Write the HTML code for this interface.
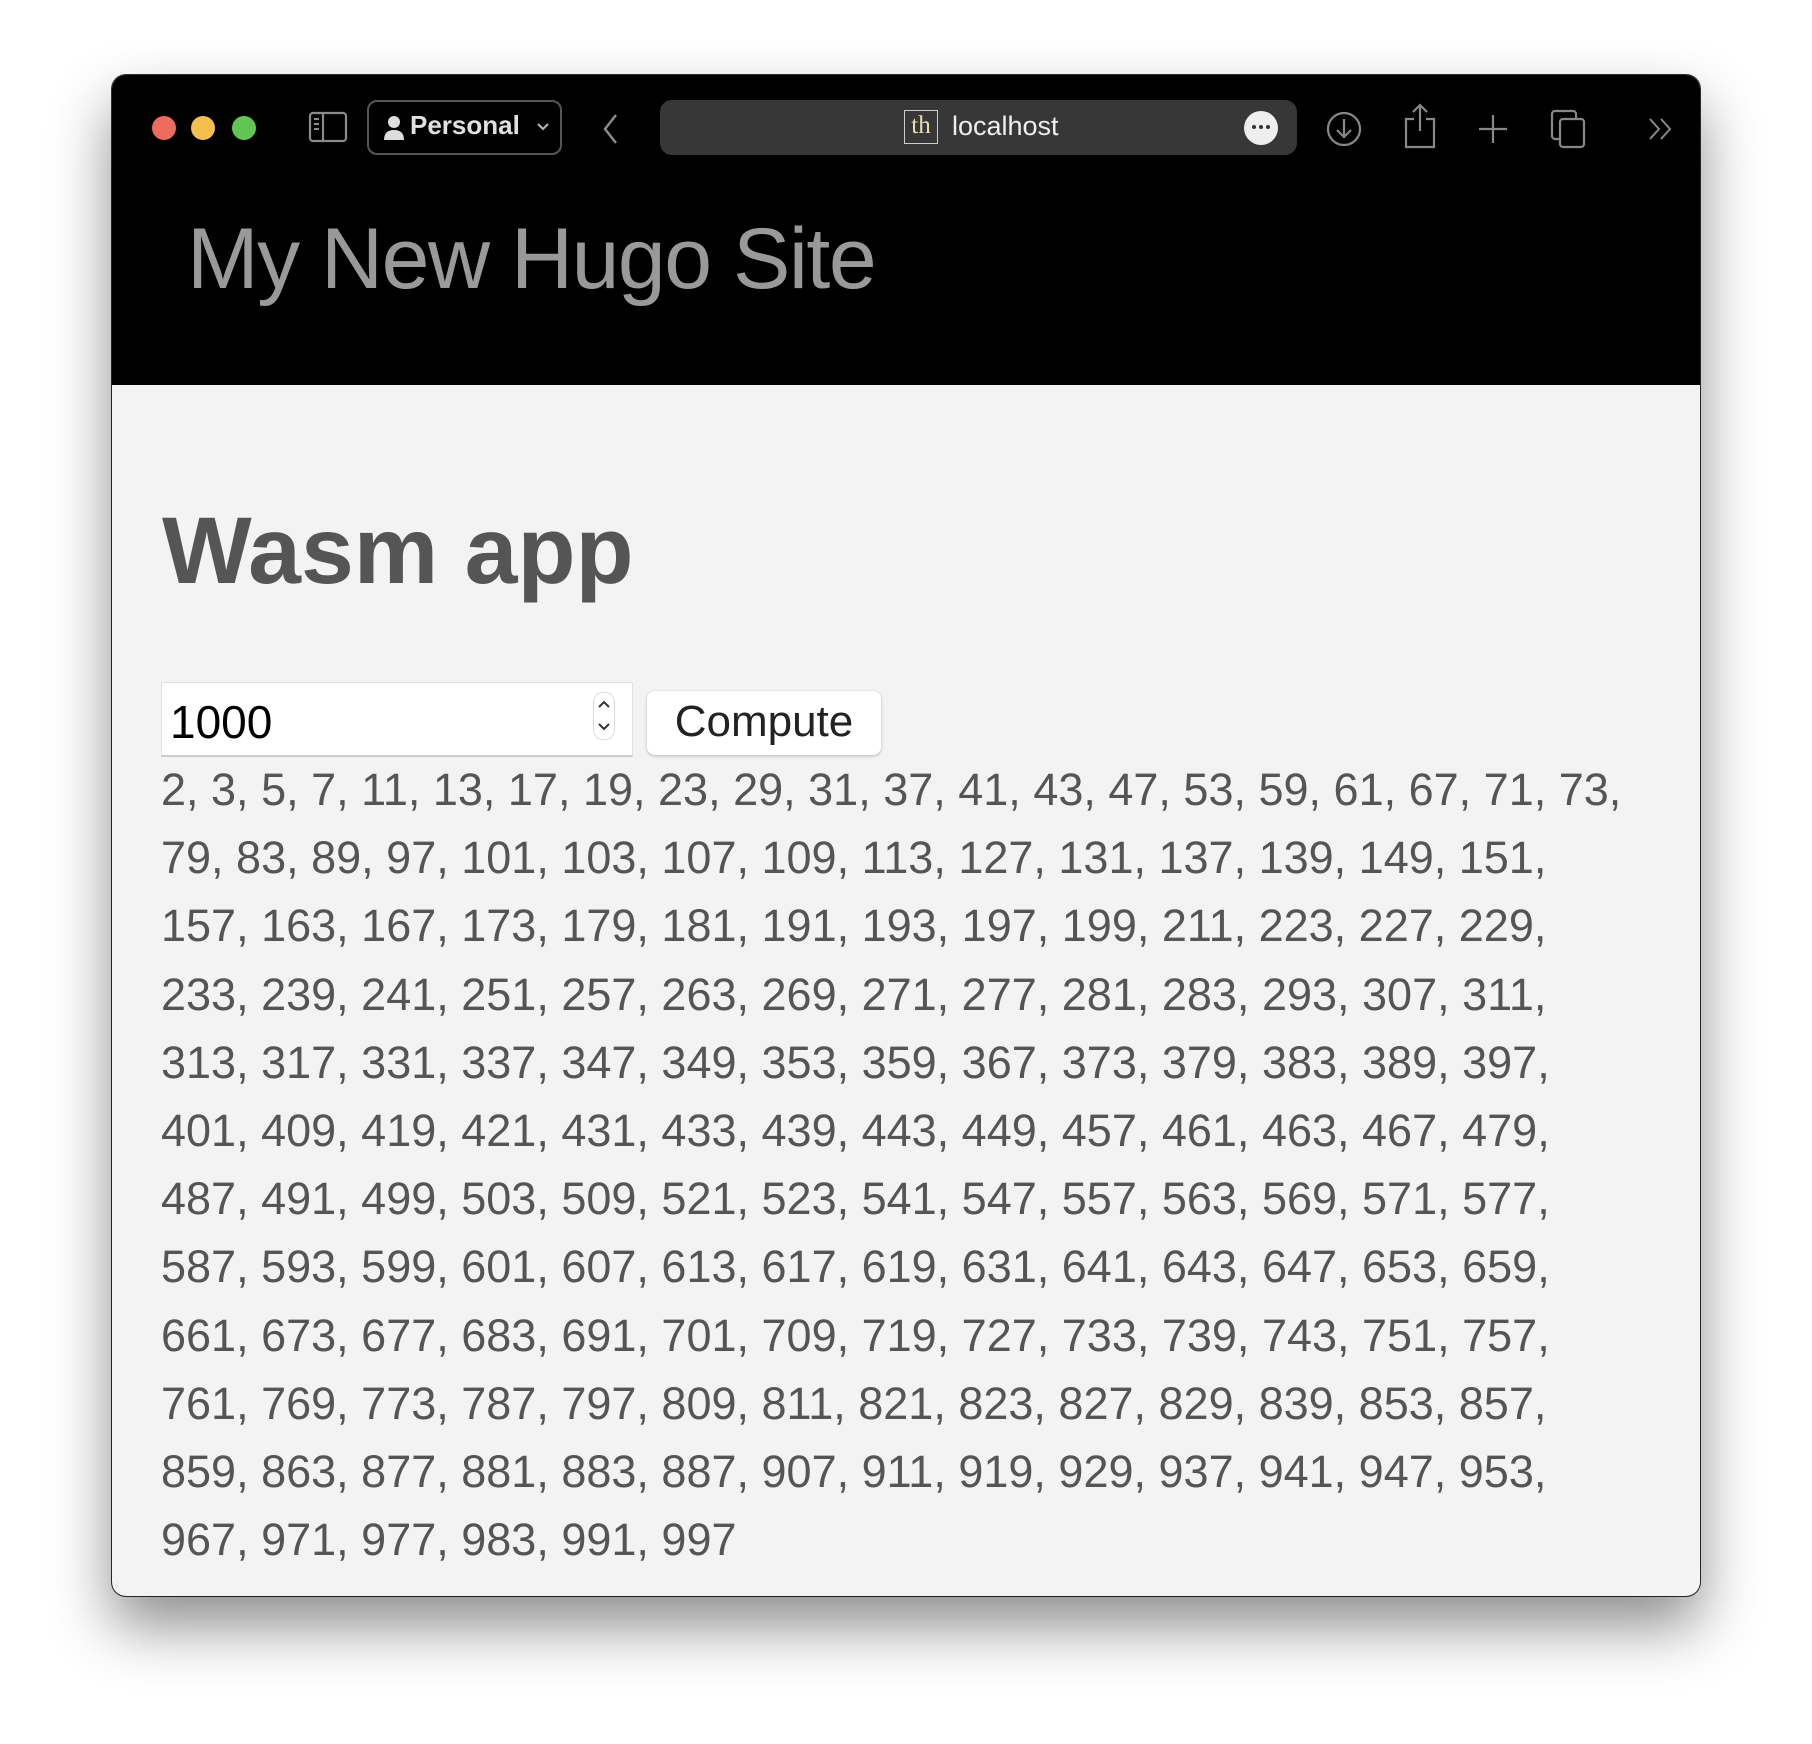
<!DOCTYPE html>
<html><head><meta charset="utf-8">
<style>
html,body{margin:0;padding:0;width:1812px;height:1744px;background:#fff;overflow:hidden;font-family:"Liberation Sans",sans-serif;}
.win{position:absolute;left:112px;top:75px;width:1588px;height:1521px;border-radius:14px;overflow:hidden;background:#f3f3f3;box-shadow:0 30px 60px rgba(0,0,0,0.45),0 0 0 1px #333;}
.hdr{position:absolute;left:0;top:0;width:1588px;height:310px;background:#000;}
.light{position:absolute;top:41px;width:24px;height:24px;border-radius:50%;}
.title{position:absolute;left:75px;top:135px;font-size:86px;letter-spacing:-1.5px;color:#999;font-weight:normal;white-space:nowrap;}
.url{position:absolute;left:548px;top:25px;width:637px;height:55px;background:#373737;border-radius:12px;}
h1{position:absolute;left:50px;top:422px;margin:0;font-size:95px;font-weight:bold;color:#555;letter-spacing:0;}
.inp{position:absolute;left:49px;top:607px;width:472px;height:75px;background:#fff;border:1px solid #e2e2e2;border-bottom:2px solid #ccc;box-sizing:border-box;}
.btn{position:absolute;left:535px;top:616px;width:234px;height:64px;background:#fff;border-radius:8px;box-shadow:0 1px 3px rgba(0,0,0,0.25);box-sizing:border-box;font-size:44px;color:#222;text-align:center;line-height:62px;}
.nums{position:absolute;left:49px;top:681px;font-size:45px;line-height:68.2px;color:#555;white-space:nowrap;}
</style></head><body>
<div class="win">
 <div class="hdr">
  <div class="light" style="left:40px;background:#ed6a5e"></div>
  <div class="light" style="left:79px;background:#f5bf4f"></div>
  <div class="light" style="left:120px;background:#61c554"></div>
  <svg style="position:absolute;left:196px;top:36px" width="40" height="32" viewBox="0 0 40 32"><rect x="2" y="2" width="36" height="28" rx="3" fill="none" stroke="#8a8a8a" stroke-width="2.2"/><line x1="15" y1="2" x2="15" y2="30" stroke="#8a8a8a" stroke-width="2.2"/><line x1="6" y1="8" x2="11" y2="8" stroke="#8a8a8a" stroke-width="2"/><line x1="6" y1="13" x2="11" y2="13" stroke="#8a8a8a" stroke-width="2"/><line x1="6" y1="18" x2="11" y2="18" stroke="#8a8a8a" stroke-width="2"/></svg>
  <div style="position:absolute;left:255px;top:25px;width:195px;height:55px;border:2px solid #555;border-radius:10px;box-sizing:border-box;"></div>
  <svg style="position:absolute;left:270px;top:39px" width="24" height="28" viewBox="0 0 24 28"><circle cx="12" cy="8" r="6" fill="#ddd"/><path d="M2 26 Q2 16 12 16 Q22 16 22 26 Z" fill="#ddd"/></svg>
  <div style="position:absolute;left:298px;top:35px;font-size:26px;font-weight:bold;color:#e0e0e0;">Personal</div>
  <svg style="position:absolute;left:424px;top:47px" width="14" height="10" viewBox="0 0 14 10"><path d="M2 2 L7 7 L12 2" fill="none" stroke="#bbb" stroke-width="2"/></svg>
  <svg style="position:absolute;left:488px;top:37px" width="20" height="34" viewBox="0 0 20 34"><path d="M16 3 L5 17 L16 31" fill="none" stroke="#8a8a8a" stroke-width="2.5"/></svg>
  <div class="url"></div>
  <div style="position:absolute;left:792px;top:35px;width:34px;height:34px;border:1.5px solid #ccc;box-sizing:border-box;font-family:'Liberation Serif',serif;font-size:25px;color:#e8dcb0;text-align:center;line-height:30px;">th</div>
  <div style="position:absolute;left:840px;top:36px;font-size:27px;color:#eee;">localhost</div>
  <div style="position:absolute;left:1132px;top:36px;width:34px;height:34px;border-radius:50%;background:#eee;"></div>
  <div style="position:absolute;left:1140px;top:50px;width:4px;height:4px;border-radius:50%;background:#333;box-shadow:7px 0 0 #333,14px 0 0 #333;"></div>
  <svg style="position:absolute;left:1213px;top:35px" width="38" height="38" viewBox="0 0 38 38"><circle cx="19" cy="19" r="16" fill="none" stroke="#888" stroke-width="2.2"/><path d="M19 9 V27 M12 20 L19 27 L26 20" fill="none" stroke="#888" stroke-width="2.2"/></svg>
  <svg style="position:absolute;left:1290px;top:28px" width="36" height="46" viewBox="0 0 36 46"><path d="M12 16 H4 V44 H32 V16 H24" fill="none" stroke="#888" stroke-width="2.2"/><path d="M18 2 V28 M11 9 L18 2 L25 9" fill="none" stroke="#888" stroke-width="2.2"/></svg>
  <svg style="position:absolute;left:1364px;top:37px" width="34" height="34" viewBox="0 0 34 34"><path d="M17 3 V31 M3 17 H31" stroke="#888" stroke-width="2.2"/></svg>
  <svg style="position:absolute;left:1437px;top:33px" width="40" height="42" viewBox="0 0 40 42"><rect x="3" y="3" width="24" height="28" rx="3" fill="none" stroke="#888" stroke-width="2.2"/><rect x="11" y="11" width="24" height="28" rx="3" fill="#000" stroke="#888" stroke-width="2.2"/></svg>
  <svg style="position:absolute;left:1535px;top:42px" width="28" height="24" viewBox="0 0 28 24"><path d="M3 2 L12 12 L3 22 M14 2 L23 12 L14 22" fill="none" stroke="#888" stroke-width="2"/></svg>
  <div class="title">My New Hugo Site</div>
 </div>
 <h1>Wasm app</h1>
 <div class="inp"><div style="position:absolute;left:8px;top:12px;font-size:46px;color:#000;">1000</div>
  <div style="position:absolute;left:431px;top:9px;width:22px;height:48px;border-radius:10px;border:1px solid #ddd;box-sizing:border-box;"></div>
  <svg style="position:absolute;left:434px;top:14px" width="16" height="38" viewBox="0 0 16 38"><path d="M3 10 L8 5 L13 10 M3 27 L8 32 L13 27" fill="none" stroke="#333" stroke-width="2"/></svg>
 </div>
 <div class="btn">Compute</div>
 <div class="nums">2, 3, 5, 7, 11, 13, 17, 19, 23, 29, 31, 37, 41, 43, 47, 53, 59, 61, 67, 71, 73,<br>79, 83, 89, 97, 101, 103, 107, 109, 113, 127, 131, 137, 139, 149, 151,<br>157, 163, 167, 173, 179, 181, 191, 193, 197, 199, 211, 223, 227, 229,<br>233, 239, 241, 251, 257, 263, 269, 271, 277, 281, 283, 293, 307, 311,<br>313, 317, 331, 337, 347, 349, 353, 359, 367, 373, 379, 383, 389, 397,<br>401, 409, 419, 421, 431, 433, 439, 443, 449, 457, 461, 463, 467, 479,<br>487, 491, 499, 503, 509, 521, 523, 541, 547, 557, 563, 569, 571, 577,<br>587, 593, 599, 601, 607, 613, 617, 619, 631, 641, 643, 647, 653, 659,<br>661, 673, 677, 683, 691, 701, 709, 719, 727, 733, 739, 743, 751, 757,<br>761, 769, 773, 787, 797, 809, 811, 821, 823, 827, 829, 839, 853, 857,<br>859, 863, 877, 881, 883, 887, 907, 911, 919, 929, 937, 941, 947, 953,<br>967, 971, 977, 983, 991, 997</div>
</div>
</body></html>
